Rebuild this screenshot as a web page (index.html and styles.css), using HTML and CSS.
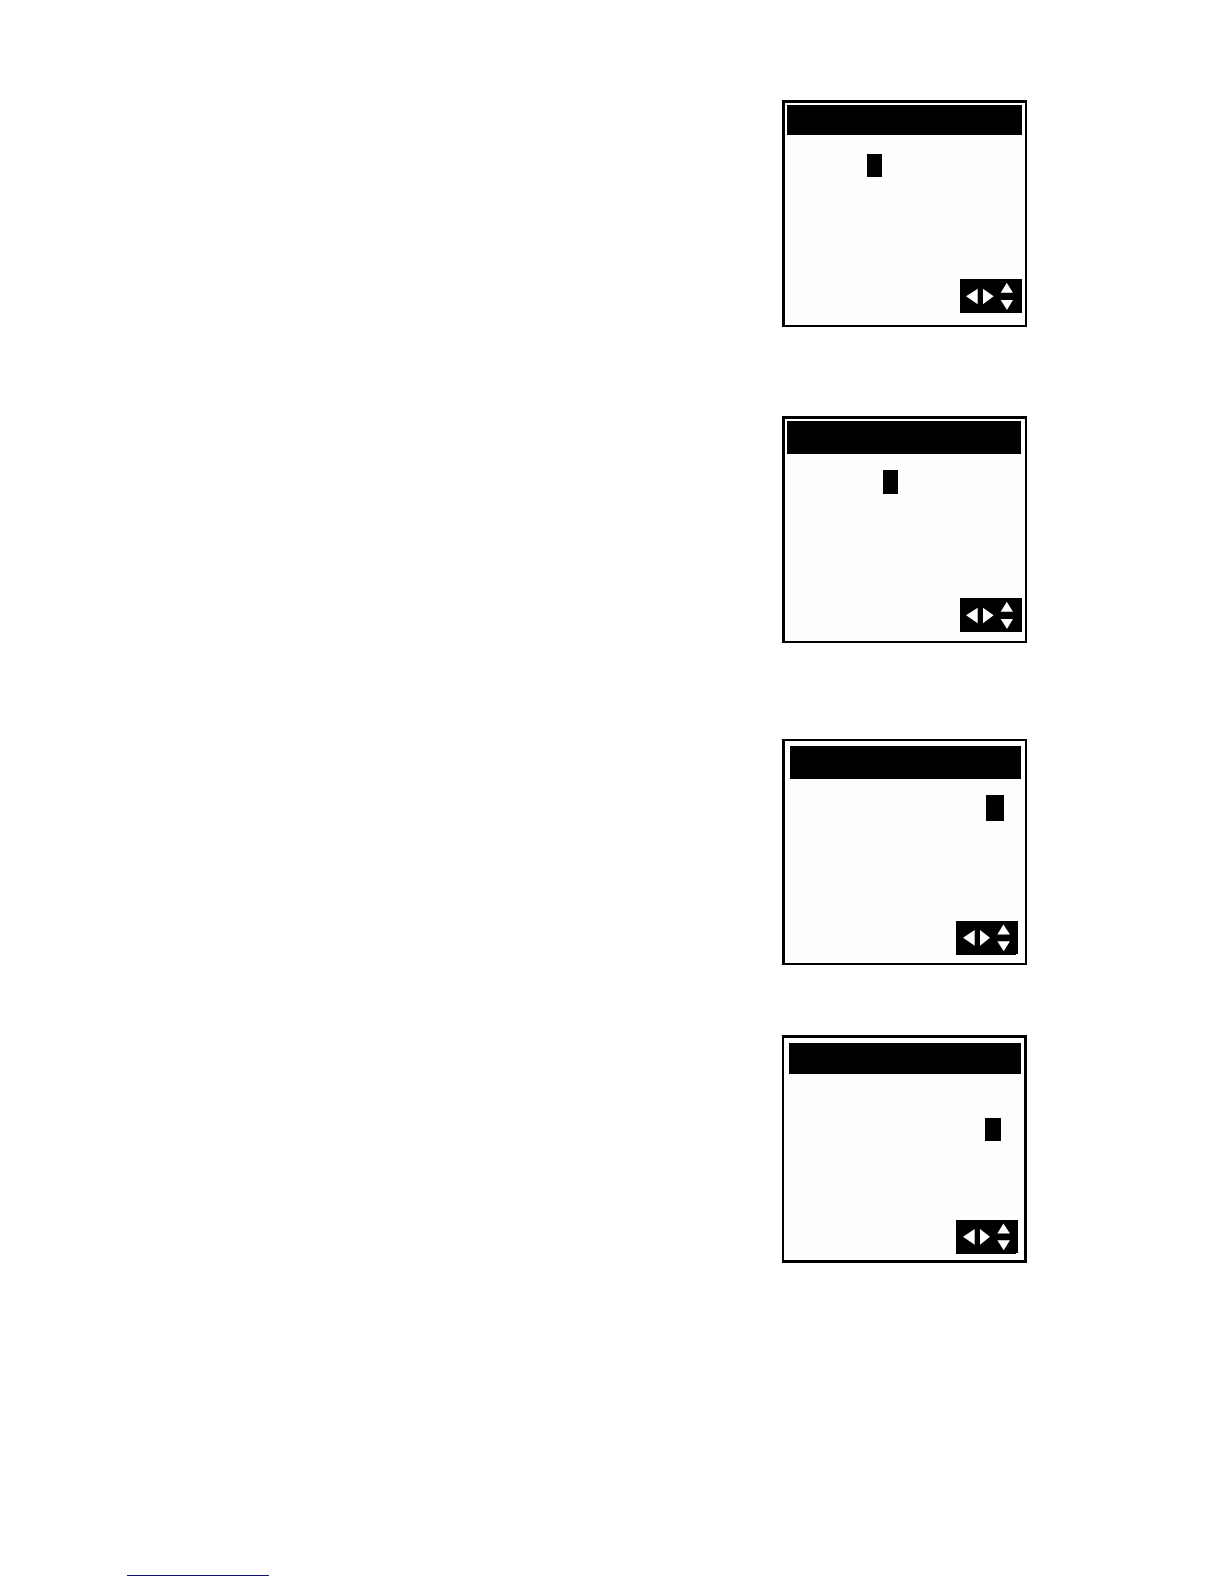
FILE: index.html
```html
<!DOCTYPE html>
<html lang="en">
<head>
<meta charset="utf-8">
<meta name="viewport" content="width=device-width, initial-scale=1">
<title>Display screens</title>
<link rel="stylesheet" href="styles.css">
</head>
<body>
<svg class="symbols" aria-hidden="true">
  <symbol id="arrows" viewBox="0 0 62 34">
    <path d="M6 17.3 17.7 9.7V25.3ZM33.7 17.3 23 9.7V25.3ZM46.8 3.7 53 13.8H40.7ZM47 31 53 21H40.7Z"/>
  </symbol>
  <symbol id="arrows-notched" viewBox="0 0 62 34">
    <path d="M7 16.8 18.7 9V24.8ZM34 16.8 24 9V24.8ZM47.4 3.4 54 13.4H41.3ZM47.7 30.3 54 20.2H41.3ZM60 33H62V34H60Z"/>
  </symbol>
</svg>
<main class="screens">
  <section class="screen screen-first">
    <div class="title-bar"></div>
    <div class="cursor"></div>
    <svg class="keypad" aria-hidden="true"><use href="#arrows"/></svg>
  </section>
  <section class="screen screen-second">
    <div class="title-bar"></div>
    <div class="cursor"></div>
    <svg class="keypad" aria-hidden="true"><use href="#arrows"/></svg>
  </section>
  <section class="screen screen-third">
    <div class="title-bar"></div>
    <div class="cursor"></div>
    <svg class="keypad" aria-hidden="true"><use href="#arrows-notched"/></svg>
  </section>
  <section class="screen screen-fourth">
    <div class="title-bar"></div>
    <div class="cursor"></div>
    <svg class="keypad" aria-hidden="true"><use href="#arrows-notched"/></svg>
  </section>
</main>
<footer class="footer"><hr class="rule"></footer>
</body>
</html>
```
FILE: styles.css
```css
* {
  box-sizing: border-box;
}

body {
  display: flex;
  flex-direction: column;
  min-height: 100vh;
  margin: 0;
  background: #fff;
}

.symbols {
  display: none;
}

.screens {
  display: flex;
  flex-direction: column;
  align-items: flex-end;
  padding: 100px 197px 40px 40px;
}

.screen {
  display: flex;
  flex-direction: column;
  width: 245px;
  min-height: 227px;
  border: solid #000;
  border-width: 3px 2px 2px 3px;
  background: #fefefe;
}

.title-bar {
  height: 33px;
  background: #000;
}

.cursor {
  width: 15px;
  height: 23px;
  background: #000;
}

.keypad {
  width: 62px;
  height: 34px;
  margin-top: auto;
  align-self: flex-end;
  background: #000;
  fill: #fefefe;
}

.screen-first {
  padding: 2px 3px 12px 2px;
}

.screen-first .title-bar {
  height: 30px;
}

.screen-first .cursor {
  margin: 19px 0 0 80px;
}

.screen-second {
  margin-top: 89px;
  padding: 2px 3px 9px 2px;
}

.screen-second .title-bar {
  margin-right: 1px;
}

.screen-second .cursor {
  height: 24px;
  margin: 16px 0 0 96px;
}

.screen-third {
  min-height: 226px;
  margin-top: 96px;
  border-top-width: 2px;
  padding: 5px 4px 8px 5px;
}

.screen-third .cursor {
  width: 18px;
  height: 26px;
  margin: 16px 0 0 196px;
}

.screen-third .keypad {
  margin-right: 3px;
}

.screen-fourth {
  min-height: 228px;
  margin-top: 70px;
  border-width: 3px 3px 3px 2px;
  padding: 5px 3px 6px 5px;
}

.screen-fourth .title-bar {
  height: 31px;
}

.screen-fourth .cursor {
  width: 16px;
  margin: 44px 0 0 196px;
}

.screen-fourth .keypad {
  margin-right: 3px;
}

.footer {
  margin-top: auto;
  padding: 0 127px 8px;
}

.rule {
  width: 142px;
  height: 1px;
  margin: 0;
  border: 0;
  background: #10107c;
}
```
